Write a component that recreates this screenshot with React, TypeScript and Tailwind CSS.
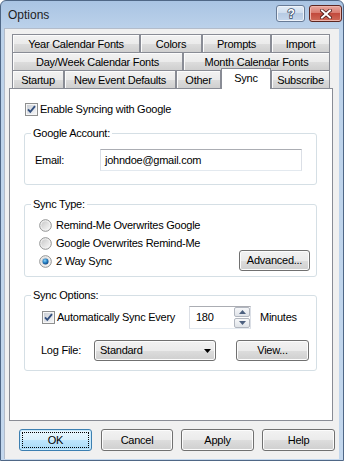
import React from "react";

const btnGrad =
  "bg-[linear-gradient(to_bottom,#f2f2f2_0%,#ebebeb_50%,#dddddd_50%,#cfcfcf_100%)]";

function Checkbox() {
  return (
    <svg width="13" height="13" viewBox="0 0 13 13" className="shrink-0">
      <defs>
        <linearGradient id="cbg" x1="0" y1="0" x2="1" y2="1">
          <stop offset="0" stopColor="#cbcfd5" />
          <stop offset="1" stopColor="#f4f5f7" />
        </linearGradient>
      </defs>
      <rect x="0.5" y="0.5" width="12" height="12" fill="#f6f6f6" stroke="#8e8f8f" />
      <rect x="2" y="2" width="9" height="9" fill="url(#cbg)" />
      <path d="M3 6.3 L5.3 8.8 L10 3.2" fill="none" stroke="#33507f" strokeWidth="1.9" />
    </svg>
  );
}

function Radio({ checked }: { checked?: boolean }) {
  return (
    <svg width="13" height="13" viewBox="0 0 13 13" className="shrink-0">
      <defs>
        <linearGradient id="rbg" x1="0" y1="0" x2="1" y2="1">
          <stop offset="0" stopColor="#c9c9c9" />
          <stop offset="1" stopColor="#f7f7f7" />
        </linearGradient>
        <radialGradient id="rdot" cx="0.4" cy="0.35" r="0.7">
          <stop offset="0" stopColor="#8fd3f8" />
          <stop offset="0.5" stopColor="#2a86c8" />
          <stop offset="1" stopColor="#0c3d7a" />
        </radialGradient>
      </defs>
      <circle cx="6.5" cy="6.5" r="5.8" fill="#f4f4f4" stroke="#8e8f8f" strokeWidth="1" />
      <circle cx="6.5" cy="6.5" r="4.3" fill="url(#rbg)" />
      {checked && <circle cx="6.5" cy="6.5" r="3" fill="url(#rdot)" />}
    </svg>
  );
}

function Button({ children, className = "" }: { children: React.ReactNode; className?: string }) {
  return (
    <div
      className={`flex items-center justify-center border border-[#707070] rounded-[3px] ${btnGrad} shadow-[inset_0_0_0_1px_#fcfcfc] ${className}`}
    >
      {children}
    </div>
  );
}

function Group({ label, className = "", children }: { label: string; className?: string; children: React.ReactNode }) {
  return (
    <div className={`relative ml-[14px] w-[293px] border border-[#d5dfe5] rounded-[3px] ${className}`}>
      <span className="absolute left-[6px] -top-[7px] bg-white px-[2px] leading-[13px]">{label}</span>
      {children}
    </div>
  );
}

function Tab({ label, w, selected }: { label: string; w: string; selected?: boolean }) {
  if (selected) {
    return (
      <div
        className={`${w} relative z-10 h-[21px] -mb-[1px] bg-white border-x border-t border-[#898c95] flex justify-center pt-[3px]`}
      >
        {label}
      </div>
    );
  }
  return (
    <div
      className={`${w} h-[18px] border-x border-t border-[#898c95] ${btnGrad} shadow-[inset_1px_1px_0_0_#fcfcfc] flex items-center justify-center pt-[1px]`}
    >
      {label}
    </div>
  );
}

export default function App() {
  return (
    <div className="w-[344px] h-[461px] overflow-hidden bg-white font-['Liberation_Sans',Arial,sans-serif] text-[11px] leading-[13px] text-black tracking-[-0.25px]">
      <div className="w-[344px] h-[461px] rounded-t-[6px] border border-[#4f6786] bg-[linear-gradient(to_bottom,#a9c4e3_0px,#bcd2ea_28px,#c3d7ed_100%)] flex flex-col">
        {/* title bar */}
        <div className="h-[27px] flex items-start shrink-0">
          <div className="pl-[7px] pt-[7px] text-[12px] leading-[14px] tracking-normal text-[#1e1e1e]">Options</div>
          <div className="ml-auto mt-[4px] flex gap-[4px] mr-[1px]">
            <div className="w-[29px] h-[17px] rounded-[3px] border border-[#687b96] bg-[linear-gradient(to_bottom,#e3ecf6_0%,#cddcee_50%,#b7cbe3_50%,#c6d7ec_100%)] flex items-center justify-center shadow-[inset_0_0_0_1px_#eef3fa]">
              <svg width="10" height="13" viewBox="0 0 10 13">
                <text x="5" y="11" textAnchor="middle" fontSize="12" fontWeight="bold" fontFamily="Liberation Sans, Arial" fill="#ffffff" stroke="#3c4e6a" strokeWidth="1.6" paintOrder="stroke">?</text>
              </svg>
            </div>
            <div className="w-[33px] h-[17px] rounded-[3px] border border-[#5d2620] bg-[linear-gradient(to_bottom,#e8a89e_0%,#d7776b_50%,#c24a3d_50%,#cf6a58_100%)] flex items-center justify-center shadow-[inset_0_0_0_1px_#eeb5ac]">
              <svg width="12" height="10" viewBox="0 0 12 10">
                <path d="M2 1.5 L10 8.5 M10 1.5 L2 8.5" stroke="#4a1712" strokeWidth="3.6" strokeLinecap="square" />
                <path d="M2 1.5 L10 8.5 M10 1.5 L2 8.5" stroke="#ffffff" strokeWidth="2" strokeLinecap="square" />
              </svg>
            </div>
          </div>
        </div>

        {/* client area */}
        <div className="h-[431px] ml-[3px] mr-[4px] bg-[#f0f0f0] border-l border-t border-[#8a9ab0]/60 flex flex-col">
          {/* tabs */}
          <div className="pt-[5px] pl-[7px] flex flex-col">
            <div className="flex">
              <Tab label="Year Calendar Fonts" w="w-[128px]" />
              <Tab label="Colors" w="w-[62px]" />
              <Tab label="Prompts" w="w-[69px]" />
              <Tab label="Import" w="w-[59px]" />
            </div>
            <div className="flex">
              <Tab label="Day/Week Calendar Fonts" w="w-[171px]" />
              <Tab label="Month Calendar Fonts" w="w-[147px]" />
            </div>
            <div className="flex items-end h-[18px]">
              <Tab label="Startup" w="w-[52px]" />
              <Tab label="New Event Defaults" w="w-[112px]" />
              <Tab label="Other" w="w-[45px]" />
              <Tab label="Sync" w="w-[50px]" selected />
              <Tab label="Subscribe" w="w-[59px]" />
            </div>
          </div>

          {/* panel */}
          <div className="ml-[4px] w-[324px] h-[333px] bg-white border border-[#898c95] flex flex-col">
            <div className="mt-[14px] ml-[15px] flex items-center gap-[2px] h-[13px]">
              <Checkbox />
              <span>Enable Syncing with Google</span>
            </div>

            <Group label="Google Account:" className="mt-[17px] h-[52px]">
              <div className="pt-[15px] pl-[10px] flex items-center">
                <span className="w-[65px]">Email:</span>
                <div className="w-[202px] h-[22px] border border-[#abadb3] border-x-[#dbdfe6] border-b-[#e3e9ef] bg-white flex items-center pl-[4px]">
                  johndoe@gmail.com
                </div>
              </div>
            </Group>

            <Group label="Sync Type:" className="mt-[19px] h-[73px]">
              <div className="flex justify-between">
                <div className="pt-[11px] pl-[14px] flex flex-col">
                  <div className="h-[18px] flex items-center gap-[4px]">
                    <Radio />
                    <span>Remind-Me Overwrites Google</span>
                  </div>
                  <div className="h-[18px] flex items-center gap-[4px]">
                    <Radio />
                    <span>Google Overwrites Remind-Me</span>
                  </div>
                  <div className="h-[18px] flex items-center gap-[4px]">
                    <Radio checked />
                    <span>2 Way Sync</span>
                  </div>
                </div>
                <div className="pt-[45px] pr-[6px]">
                  <Button className="w-[71px] h-[21px]">Advanced...</Button>
                </div>
              </div>
            </Group>

            <Group label="Sync Options:" className="mt-[18px] h-[76px]">
              <div className="pt-[10px] flex items-center h-[33px]">
                <div className="w-[164px] pl-[17px] flex items-center gap-[2px]">
                  <Checkbox />
                  <span>Automatically Sync Every</span>
                </div>
                <div className="w-[62px] h-[23px] border border-[#abadb3] border-x-[#dbdfe6] border-b-[#e3e9ef] bg-white flex items-center">
                  <span className="pl-[6px] flex-1">180</span>
                  <div className="w-[16px] flex flex-col gap-[1px] mr-[0px]">
                    <div className="h-[10px] border border-[#b1b6bf] rounded-[2px] bg-[linear-gradient(to_bottom,#f6f7f9,#dfe3e8)] flex items-center justify-center">
                      <svg width="7" height="4" viewBox="0 0 7 4"><path d="M0 4 L3.5 0 L7 4 Z" fill="#4c607f" /></svg>
                    </div>
                    <div className="h-[10px] border border-[#b1b6bf] rounded-[2px] bg-[linear-gradient(to_bottom,#f6f7f9,#dfe3e8)] flex items-center justify-center">
                      <svg width="7" height="4" viewBox="0 0 7 4"><path d="M0 0 L3.5 4 L7 0 Z" fill="#4c607f" /></svg>
                    </div>
                  </div>
                </div>
                <span className="ml-[9px]">Minutes</span>
              </div>
              <div className="mt-[11px] flex items-center h-[21px]">
                <span className="w-[69px] pl-[16px]">Log File:</span>
                <div className={`w-[122px] h-[21px] border border-[#707070] rounded-[3px] ${btnGrad} shadow-[inset_0_0_0_1px_#fcfcfc] flex items-center pl-[5px] pr-[4px]`}>
                  <span className="flex-1">Standard</span>
                  <svg width="7" height="4" viewBox="0 0 7 4"><path d="M0 0 L7 0 L3.5 4 Z" fill="#000" /></svg>
                </div>
                <Button className="ml-[20px] w-[73px] h-[21px]">View...</Button>
              </div>
            </Group>
          </div>

          {/* bottom buttons */}
          <div className="mt-[8px] flex">
            <div className="ml-[14px] w-[73px] h-[22px] border border-[#3c7fb1] rounded-[3px] bg-[linear-gradient(to_bottom,#eaf6fd_0%,#d9f0fc_50%,#bee6fd_50%,#a7d9f5_100%)] shadow-[inset_0_0_0_1px_#c9eafc] p-[2px] flex">
              <div className="flex-1 border border-dotted border-black flex items-center justify-center">OK</div>
            </div>
            <Button className="ml-[9px] w-[72px] h-[22px]">Cancel</Button>
            <Button className="ml-[8px] w-[73px] h-[22px]">Apply</Button>
            <Button className="ml-[8px] w-[73px] h-[22px]">Help</Button>
          </div>
        </div>
      </div>
    </div>
  );
}
